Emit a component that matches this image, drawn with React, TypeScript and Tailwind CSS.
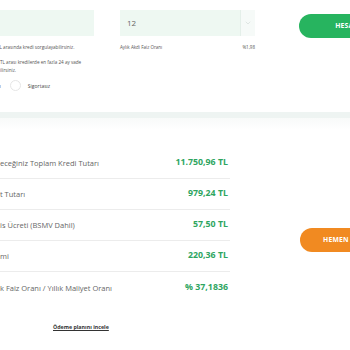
import { ChevronDown } from "lucide-react";

// labels run off the left edge of the crop; `pre` is the hidden part
const rows = [
  { pre: "Geri Ödey", label: "eceğiniz Toplam Kredi Tutarı", value: "11.750,96 TL" },
  { pre: "Aylık Taksi", label: "t Tutarı", value: "979,24 TL" },
  { pre: "Kredi Tahs", label: "is Ücreti (BSMV Dahil)", value: "57,50 TL" },
  { pre: "Sigorta Pri", label: "mi", value: "220,36 TL" },
  { pre: "Efektif Yıllı", label: "k Faiz Oranı / Yıllık Maliyet Oranı", value: "% 37,1836" },
];

function Pre({ text, w = "w-[36px]" }: { text: string; w?: string }) {
  return (
    <span className={`inline-block ${w} overflow-hidden text-right whitespace-nowrap align-top`}>{text}</span>
  );
}

export default function App() {
  return (
    <div className="w-[350px] h-[350px] overflow-hidden bg-white font-['Open_Sans',sans-serif]">
      <div className="-ml-[36px] w-[440px] pt-[10px]">
        {/* form row */}
        <div className="flex">
          <div className="w-[130px]">
            <div className="h-[26px] bg-[#eef8f2]" />
            <p className="mt-[7px] text-[4.6px] leading-[8px] text-[#555] whitespace-nowrap">
              <Pre text="1.000 - 50.000 " w="w-[33px]" />
              TL arasında kredi sorgulayabilirsiniz.
            </p>
            <div className="mt-[7px] text-[4.6px] leading-[8px] text-[#555] whitespace-nowrap">
              <div>
                <Pre text="10.000 - 50.000 " />
                TL arası kredilerde en fazla 24 ay vade
              </div>
              <div>
                <Pre text="vadeyi de seçeb" />
                ilirsiniz.
              </div>
            </div>
            <div className="mt-[6px] flex items-center gap-[9px]">
              <div className="flex items-center gap-[7px]">
                <span className="w-[11px] h-[11px] rounded-full border border-[#e6e6e6]" />
                <span className="text-[5px] leading-[8px] text-[#444]">Sigortalı</span>
              </div>
              <div className="flex items-center gap-[7px]">
                <span className="w-[11px] h-[11px] rounded-full border border-[#e6e6e6]" />
                <span className="text-[5px] leading-[8px] text-[#444]">Sigortasız</span>
              </div>
            </div>
          </div>

          <div className="ml-[26px] w-[135px]">
            <div className="h-[26px] flex bg-[#eef8f2]">
              <div className="flex-1 flex items-center pl-[7px] text-[8px] text-[#666]">12</div>
              <div className="w-[15px] flex items-center justify-center bg-[#f6faf8] border-l border-[#e4efe9]">
                <ChevronDown size={8} strokeWidth={1.5} className="text-[#c9d3ce]" />
              </div>
            </div>
            <div className="mt-[7px] flex justify-between text-[4.5px] leading-[8px] text-[#555]">
              <span>Aylık Akdi Faiz Oranı</span>
              <span>%1,98</span>
            </div>
          </div>

          <div className="ml-[44px]">
            <button className="h-[24px] w-[104px] mt-[1px] rounded-full bg-[#27b45f] text-white text-[6.8px] font-bold tracking-[0.2px]">
              HESAPLA
            </button>
          </div>
        </div>

        {/* separator band */}
        <div className="mt-[21px] h-[6px] bg-[#eef4f2]" />
        <div className="h-[12px] bg-gradient-to-b from-[#f8faf9] to-white" />

        {/* results */}
        <div className="mt-[18px] flex">
          <div className="w-[266px]">
            {rows.map((r, i) => (
              <div
                key={i}
                className={`h-[31px] flex items-center justify-between pr-[2px] ${i < rows.length - 1 ? "border-b border-[#ececec]" : ""}`}
              >
                <span className="text-[7.5px] leading-[12px] text-[#666] whitespace-nowrap">
                  <Pre text={r.pre} />
                  {r.label}
                </span>
                <span className="text-[8.8px] font-bold text-[#2ea55f]">{r.value}</span>
              </div>
            ))}
            <div className="mt-[20px] pl-[89px] text-[5.3px] leading-[8px]">
              <a className="font-bold text-[#333] underline">Ödeme planını incele</a>
            </div>
          </div>
          <div className="ml-[70px] pt-[76px]">
            <button className="h-[24px] w-[102px] rounded-full bg-[#f18a21] text-white text-[6.8px] font-bold tracking-[0.2px]">
              HEMEN BAŞVUR
            </button>
          </div>
        </div>
      </div>
    </div>
  );
}
